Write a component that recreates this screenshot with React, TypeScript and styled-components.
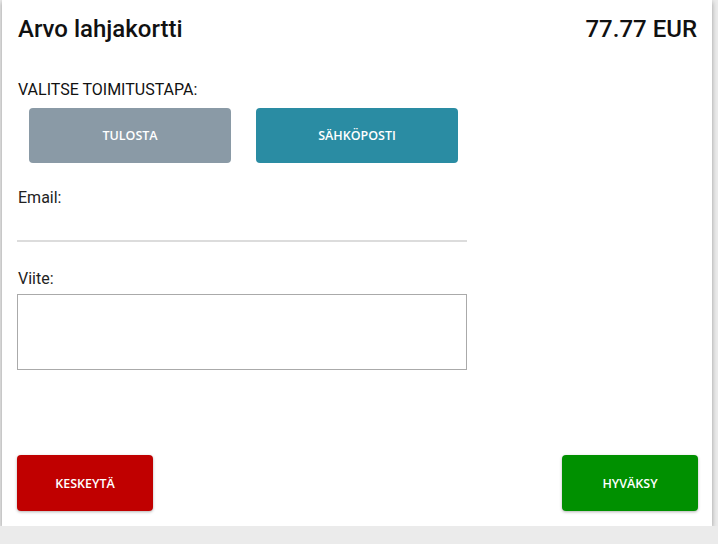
import styled, { createGlobalStyle } from 'styled-components';

const GlobalStyle = createGlobalStyle`
  html, body {
    margin: 0;
    padding: 0;
    background: #ebebeb;
    font-family: Roboto, 'Liberation Sans', sans-serif;
    color: #111;
  }
  * {
    box-sizing: border-box;
  }
`;

export default function App() {
  return (
    <>
      <GlobalStyle />
      <Panel>
        <Header>
          <Title>Arvo lahjakortti</Title>
          <Title>77.77 EUR</Title>
        </Header>

        <SectionLabel>VALITSE TOIMITUSTAPA:</SectionLabel>
        <MethodRow>
          <MethodButton color="#8a9aa6">TULOSTA</MethodButton>
          <MethodButton color="#2a8ca3">SÄHKÖPOSTI</MethodButton>
        </MethodRow>

        <FieldLabel>Email:</FieldLabel>
        <EmailInput type="email" />

        <FieldLabel second>Viite:</FieldLabel>
        <RefArea />

        {/* Footer actions */}
        <Footer>
          <ActionButton color="#c00000">KESKEYTÄ</ActionButton>
          <ActionButton color="#009000">HYVÄKSY</ActionButton>
        </Footer>
      </Panel>
    </>
  );
}

const Panel = styled.div`
  display: flex;
  flex-direction: column;
  width: 710px;
  height: 526px;
  margin-left: 2px;
  padding: 15px 14px 15px 15px;
  background: #fff;
  box-shadow: 0 2px 5px rgba(0, 0, 0, 0.35);
`;

const Header = styled.div`
  display: flex;
  justify-content: space-between;
  align-items: baseline;
  padding: 0 1px;
`;

const Title = styled.h1`
  margin: 0;
  font-size: 24px;
  line-height: 28px;
  font-weight: 500;
  color: #111;
`;

const SectionLabel = styled.div`
  margin-top: 37px;
  padding-left: 1px;
  font-size: 16px;
  line-height: 19px;
`;

const MethodRow = styled.div`
  display: flex;
  gap: 25px;
  margin-top: 9px;
  padding-left: 12px;
`;

const MethodButton = styled.button<{ color: string }>`
  width: 202px;
  height: 55px;
  border: none;
  border-radius: 4px;
  background: ${(p) => p.color};
  color: #fff;
  font-family: 'Open Sans', sans-serif;
  font-weight: 600;
  font-size: 12.5px;
  cursor: pointer;
`;

const FieldLabel = styled.div<{ second?: boolean }>`
  margin-top: ${(p) => (p.second ? '27px' : '25px')};
  padding-left: 1px;
  font-size: 16px;
  line-height: 19px;
  color: #222;
`;

const EmailInput = styled.input`
  width: 450px;
  height: 35px;
  border: none;
  border-bottom: 2px solid #dcdcdc;
  outline: none;
  font-size: 16px;
  font-family: inherit;
`;

const RefArea = styled.textarea`
  width: 450px;
  height: 76px;
  margin-top: 6px;
  border: 1px solid #aaa;
  resize: none;
  outline: none;
  font-size: 16px;
  font-family: inherit;
`;

const Footer = styled.div`
  display: flex;
  justify-content: space-between;
  margin-top: auto;
`;

const ActionButton = styled.button<{ color: string }>`
  width: 136px;
  height: 56px;
  border: none;
  border-radius: 4px;
  background: ${(p) => p.color};
  color: #fff;
  font-family: 'Open Sans', sans-serif;
  font-weight: 600;
  font-size: 12.5px;
  box-shadow: 0 1px 3px rgba(0, 0, 0, 0.3);
  cursor: pointer;
`;
